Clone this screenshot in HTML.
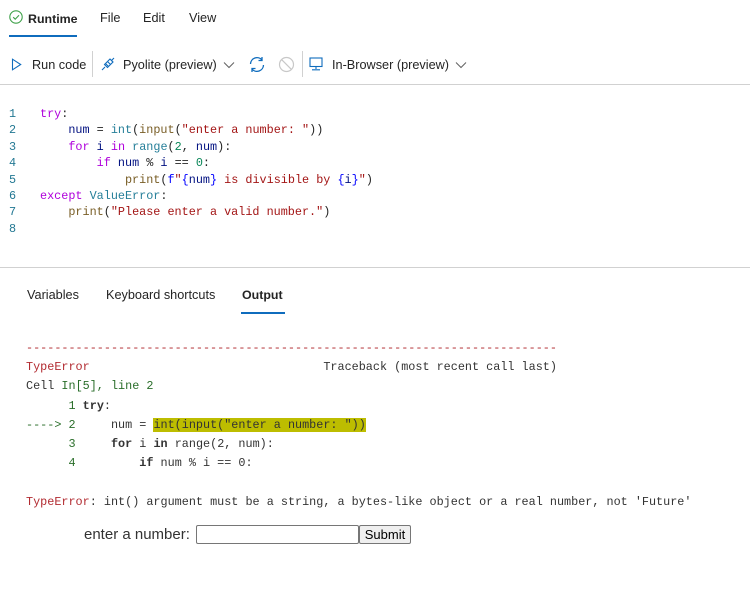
<!DOCTYPE html>
<html><head><meta charset="utf-8"><style>
body{margin:0;width:750px;height:594px;background:#fff;position:relative;overflow:hidden;font-family:"Liberation Sans",Arial,sans-serif;color:#242424}
.a{position:absolute;white-space:pre}
.t{font-size:12.7px;line-height:16px}
.m{font-family:"Liberation Mono",monospace;font-size:11.8px;line-height:16px}
.kw{color:#af00db}.v{color:#001080}.f{color:#795e26}.s{color:#a31515}.n{color:#098658}.ty{color:#267f99}.b{color:#0000ff}
.ln{color:#237893}
.r{color:#b22b31}.g{color:#1c7a1c}.og{color:#2a6e2a}
</style></head><body>
<svg class="a" style="left:9px;top:10px" width="14" height="14" viewBox="0 0 14 14"><circle cx="7" cy="7" r="6.2" fill="none" stroke="#3fa14a" stroke-width="1.1"/><path d="M4.2 7.2l2 2 3.8-4" fill="none" stroke="#3fa14a" stroke-width="1.1"/></svg>
<div class="a t" style="left:28px;top:11px;font-weight:bold;color:#242424;font-size:12.4px">Runtime</div>
<div style="position:absolute;left:9px;top:35px;width:68px;height:2px;background:#0f6cbd"></div>
<div class="a t" style="left:100px;top:10px">File</div>
<div class="a t" style="left:143px;top:10px">Edit</div>
<div class="a t" style="left:189px;top:10px">View</div>
<svg class="a" style="left:11px;top:58px" width="11" height="13" viewBox="0 0 11 13"><path d="M1.5 1.2v10.6l8.2-5.3z" fill="none" stroke="#0f6cbd" stroke-width="1.1"/></svg>
<div class="a t" style="left:32px;top:57px">Run code</div>
<div style="position:absolute;left:92px;top:51px;width:1px;height:26px;background:#d1d1d1"></div>
<svg class="a" style="left:101px;top:57px" width="14" height="14" viewBox="0 0 14 14"><path d="M1 13l3-3M10 4l3-3M4.5 6.5l3 3M3.5 7.5l3-3 3 3-3 3zM6.5 4.5l2.5-2.5 3 3-2.5 2.5" fill="none" stroke="#0f6cbd" stroke-width="1.1"/></svg>
<div class="a t" style="left:123px;top:57px">Pyolite (preview)</div>
<svg class="a" style="left:223px;top:61px" width="12" height="8" viewBox="0 0 12 8"><path d="M1 1.5l5 5 5-5" fill="none" stroke="#616161" stroke-width="1"/></svg>
<svg class="a" style="left:248px;top:56px" width="18" height="17" viewBox="0 0 18 17"><path d="M2.5 8A6.5 6.5 0 0 1 14 4M15.5 9A6.5 6.5 0 0 1 4 13M14 1v3.5h-3.5M4 16v-3.5h3.5" fill="none" stroke="#0f6cbd" stroke-width="1.3"/></svg>
<svg class="a" style="left:278px;top:56px" width="17" height="17" viewBox="0 0 17 17"><circle cx="8.5" cy="8.5" r="7" fill="none" stroke="#c8c8c8" stroke-width="1.2"/><path d="M3.6 3.6l9.8 9.8" stroke="#c8c8c8" stroke-width="1.2"/></svg>
<div style="position:absolute;left:302px;top:51px;width:1px;height:26px;background:#d1d1d1"></div>
<svg class="a" style="left:309px;top:57px" width="14" height="14" viewBox="0 0 14 14"><rect x="1" y="1" width="12" height="8.5" fill="none" stroke="#0f6cbd" stroke-width="1.1"/><path d="M7 9.5v2.5M3 12.8h8" stroke="#0f6cbd" stroke-width="1.1"/></svg>
<div class="a t" style="left:332px;top:57px">In-Browser (preview)</div>
<svg class="a" style="left:455px;top:61px" width="12" height="8" viewBox="0 0 12 8"><path d="M1 1.5l5 5 5-5" fill="none" stroke="#616161" stroke-width="1"/></svg>
<div style="position:absolute;left:0;top:84px;width:750px;height:1px;background:#d1d1d1"></div>
<div class="a m ln" style="left:9px;top:106px;line-height:16.4px">1
2
3
4
5
6
7
8</div>
<div class="a m" style="left:40px;top:106px;line-height:16.4px"><span class="kw">try</span>:
    <span class="v">num</span> = <span class="ty">int</span>(<span class="f">input</span>(<span class="s">"enter a number: "</span>))
    <span class="kw">for</span> <span class="v">i</span> <span class="kw">in</span> <span class="ty">range</span>(<span class="n">2</span>, <span class="v">num</span>):
        <span class="kw">if</span> <span class="v">num</span> % <span class="v">i</span> == <span class="n">0</span>:
            <span class="f">print</span>(<span class="b">f</span><span class="s">"</span><span class="b">{</span><span class="v">num</span><span class="b">}</span><span class="s"> is divisible by </span><span class="b">{</span><span class="v">i</span><span class="b">}</span><span class="s">"</span>)
<span class="kw">except</span> <span class="ty">ValueError</span>:
    <span class="f">print</span>(<span class="s">"Please enter a valid number."</span>)
</div>
<div style="position:absolute;left:0;top:267px;width:750px;height:1px;background:#d1d1d1"></div>
<div class="a t" style="left:27px;top:287px">Variables</div>
<div class="a t" style="left:106px;top:287px">Keyboard shortcuts</div>
<div class="a t" style="left:242px;top:287px;font-weight:bold;font-size:12.4px">Output</div>
<div style="position:absolute;left:241px;top:312px;width:44px;height:2px;background:#0f6cbd"></div>
<div class="a m" style="left:26px;top:339px;line-height:19.2px;color:#333"><span class="r">---------------------------------------------------------------------------</span>
<span class="r">TypeError</span>                                 Traceback (most recent call last)
Cell <span class="og">In[5], line 2</span>
<span class="og">      1</span> <b>try</b>:
<span class="og">----&gt; 2</span>     num = <span style="background:#bdbd00">int(input("enter a number: "))</span>
<span class="og">      3</span>     <b>for</b> i <b>in</b> range(2, num):
<span class="og">      4</span>         <b>if</b> num % i == 0:

<span class="r">TypeError</span>: int() argument must be a string, a bytes-like object or a real number, not 'Future'</div>
<div class="a" style="left:84px;top:526px;font-size:15px;color:#333">enter a number:</div>
<div style="position:absolute;left:196px;top:525px;width:161px;height:17px;border:1px solid #767676;border-radius:2px"></div>
<div style="position:absolute;left:359px;top:525px;width:50px;height:17px;border:1px solid #767676;border-radius:2px;background:#efefef;font-size:13px;text-align:center;line-height:17px;color:#000">Submit</div>
</body></html>
